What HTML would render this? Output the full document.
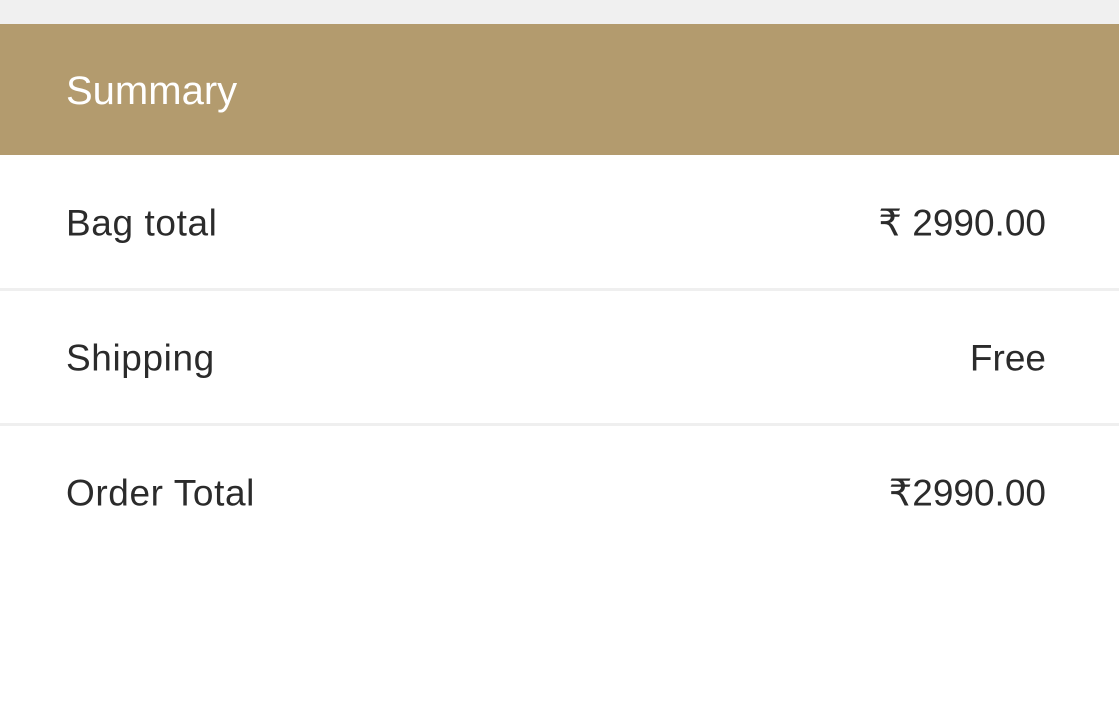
<!DOCTYPE html>
<html><head><style>
body{margin:0;width:1119px;height:706px;background:#fff;font-family:"Liberation Sans","DejaVu Sans",sans-serif;overflow:hidden}
.top{height:24px;background:#f0f0f0}
.hd{height:131px;background:#b39b6e;color:#fff;font-size:40px;line-height:135px;padding-left:66px;box-sizing:border-box}
.row{position:relative;height:134px;color:#2b2b2b;font-size:37px;border-bottom:3px solid #efefef;box-sizing:border-box}
.row span{position:absolute;top:50%;transform:translateY(-47%);line-height:1}
.l{left:66px;letter-spacing:0.6px}.r{right:73px}
</style></head><body>
<div class="top"></div>
<div class="hd">Summary</div>
<div class="row" style="height:136px"><span class="l">Bag total</span><span class="r">₹ 2990.00</span></div>
<div class="row" style="height:135px"><span class="l">Shipping</span><span class="r">Free</span></div>
<div class="row" style="border:none;height:132px"><span class="l">Order Total</span><span class="r">₹2990.00</span></div>
</body></html>
